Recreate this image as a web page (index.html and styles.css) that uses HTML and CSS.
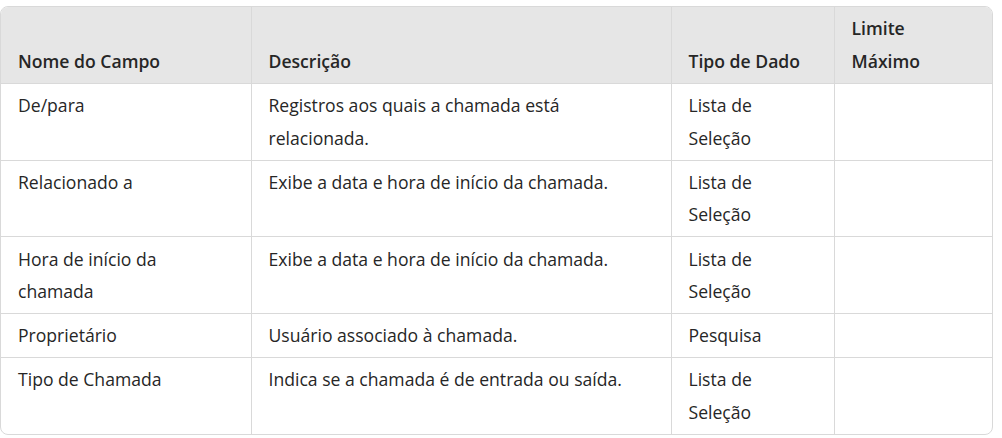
FILE: index.html
```html
<!DOCTYPE html>
<html lang="pt">
<head>
<meta charset="utf-8">
<link rel="stylesheet" href="styles.css">
</head>
<body>
<div class="wrap">
<table class="grid">
<colgroup>
<col class="c1"><col class="c2"><col class="c3"><col class="c4">
</colgroup>
<thead>
<tr><th>Nome do Campo</th><th>Descrição</th><th>Tipo de Dado</th><th>Limite Máximo</th></tr>
</thead>
<tbody>
<tr><td>De/para</td><td>Registros aos quais a chamada está relacionada.</td><td>Lista de Seleção</td><td></td></tr>
<tr><td>Relacionado a</td><td>Exibe a data e hora de início da chamada.</td><td>Lista de Seleção</td><td></td></tr>
<tr><td>Hora de início da chamada</td><td>Exibe a data e hora de início da chamada.</td><td>Lista de Seleção</td><td></td></tr>
<tr><td>Proprietário</td><td>Usuário associado à chamada.</td><td>Pesquisa</td><td></td></tr>
<tr><td>Tipo de Chamada</td><td>Indica se a chamada é de entrada ou saída.</td><td>Lista de Seleção</td><td></td></tr>
</tbody>
</table>
</div>
</body>
</html>
```
FILE: styles.css
```css
html, body {
  margin: 0;
  padding: 0;
  background: #ffffff;
}
body {
  font-family: "Open Sans", "Noto Sans", sans-serif;
  font-size: 17.6px;
  color: #262626;
}
.wrap {
  margin: 6px 0 0 0;
  width: 993px;
  border: 1px solid #d9d9d9;
  border-radius: 8px;
  overflow: hidden;
  box-sizing: border-box;
}
.grid {
  width: 100%;
  border-collapse: collapse;
  table-layout: fixed;
}
.c1 { width: 250px; }
.c2 { width: 420px; }
.c3 { width: 163px; }
.c4 { width: 158px; }
.grid th, .grid td {
  padding: 5.2px 16px 5.2px 17px;
  line-height: 32.7px;
  text-align: left;
  border-left: 1px solid #d9d9d9;
  border-top: 1px solid #d9d9d9;
}
.grid th:first-child, .grid td:first-child { border-left: none; }
.grid thead th {
  border-top: none;
  background: #e6e6e6;
  font-weight: 600;
  vertical-align: bottom;
}
.grid thead th:last-child { padding-right: 24px; }
.grid td {
  vertical-align: top;
  font-weight: 400;
}
```
